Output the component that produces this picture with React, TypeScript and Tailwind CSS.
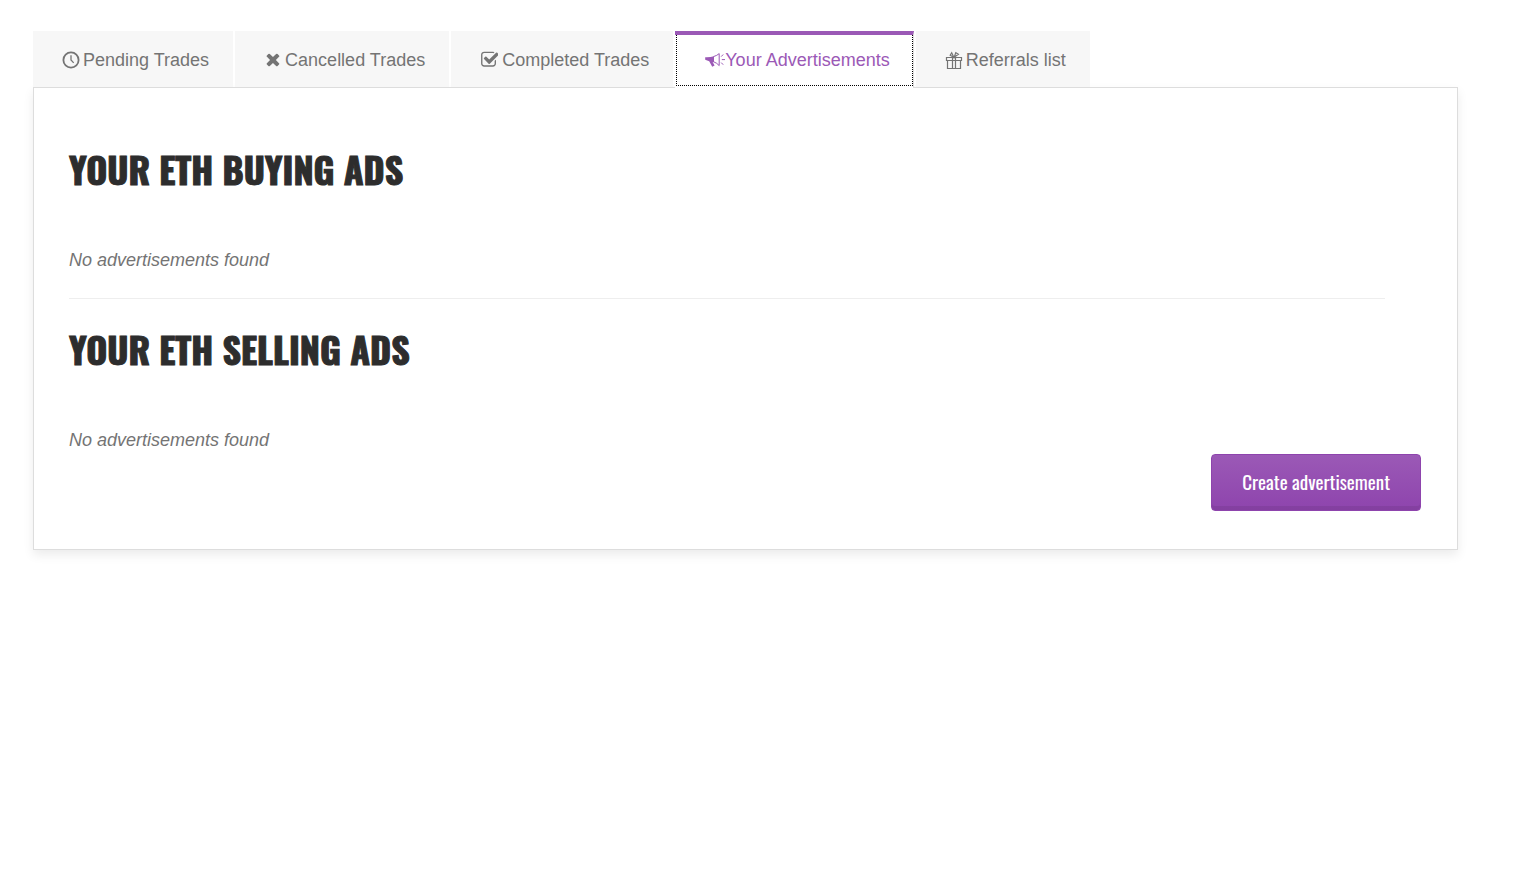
import { useState } from "react";
import type { ReactNode } from "react";

const ClockIcon = () => (
  <svg aria-hidden="true" className="mr-1 h-[18px] w-4 shrink-0" viewBox="0 0 16 18" overflow="visible" fill="none" stroke="currentColor">
    <circle cx="8" cy="9" r="7.6" strokeWidth="1.8" />
    <path d="M8 4.2V9l2.7 2.9" strokeWidth="1.3" />
  </svg>
);

const CrossIcon = () => (
  <svg aria-hidden="true" className="mr-1 h-[18px] w-4 shrink-0" viewBox="150 160 1500 1600" fill="currentColor">
    <path d="M1490 1322q0 40-28 68l-136 136q-28 28-68 28t-68-28l-294-294-294 294q-28 28-68 28t-68-28l-136-136q-28-28-28-68t28-68l294-294-294-294q-28-28-28-68t28-68l136-136q28-28 68-28t68 28l294 294 294-294q28-28 68-28t68 28l136 136q28 28 28 68t-28 68l-294 294 294 294q28 28 28 68z" />
  </svg>
);

const CheckIcon = () => (
  <svg aria-hidden="true" className="mr-1 h-[18px] w-[17px] shrink-0" viewBox="120 60 1600 1700" fill="currentColor">
    <path d="M1472 930v318q0 119-84.5 203.5t-203.5 84.5h-832q-119 0-203.5-84.5t-84.5-203.5v-832q0-119 84.5-203.5t203.5-84.5h832q63 0 117 25 15 7 18 23 3 17-9 29l-49 49q-10 10-23 10-3 0-9-2-23-6-45-6h-832q-66 0-113 47t-47 113v832q0 66 47 113t113 47h832q66 0 113-47t47-113v-254q0-13 9-22l64-64q10-10 23-10 6 0 12 3 20 8 20 29zm231-489l-814 814q-24 24-57 24t-57-24l-430-430q-24-24-24-57t24-57l110-110q24-24 57-24t57 24l263 263 647-647q24-24 57-24t57 24l110 110q24 24 24 57t-24 57z" transform="translate(60 0)" />
  </svg>
);

const MegaphoneIcon = () => (
  <svg aria-hidden="true" className="h-[18px] w-5 shrink-0" viewBox="0 0 20 18" fill="none" stroke="currentColor">
    <path d="M.2 6.3Q5 6.6 9 5.2v6L7.6 11l2 3.6-2.4 1.2-3-5.6L.2 8.8z" fill="currentColor" stroke="none" />
    <path d="M8.5 5.6Q12 4.6 14.2 2.6v12Q12 12 8.5 10.7" strokeWidth="1" />
    <path d="M16.2 5.6l2-2.1M16.8 8.6H20M16.2 11.6l2 2.1" strokeWidth="1" />
  </svg>
);

const GiftIcon = () => (
  <svg aria-hidden="true" className="mr-1 h-[18px] w-4 shrink-0" viewBox="0 0 16 18" overflow="visible" fill="none" stroke="currentColor" strokeWidth="1.2">
    <path d="M.5 6.5h15v3H.5zM1.5 9.5v8h13v-8M6.5 6.5v11M9.5 6.5v11" />
    <path d="M7.8 6.2L4.2 4.2l1.5-2.4zM8.2 6.2L9.8 1.6l2.6 1.6z" />
  </svg>
);

const tabs: { label: string; icon: ReactNode }[] = [
  { label: "Pending Trades", icon: <ClockIcon /> },
  { label: "Cancelled Trades", icon: <CrossIcon /> },
  { label: "Completed Trades", icon: <CheckIcon /> },
  { label: "Your Advertisements", icon: <MegaphoneIcon /> },
  { label: "Referrals list", icon: <GiftIcon /> },
];

function AdsSection({ title }: { title: string }) {
  return (
    <section>
      <h2 className="font-['Oswald','Liberation_Sans_Narrow',sans-serif] text-4xl leading-[58px] font-bold text-[#2d2d2d] uppercase [-webkit-text-stroke:1px_#2d2d2d]">
        {title}
      </h2>
      <p className="mt-12 text-lg leading-7 italic">No advertisements found</p>
    </section>
  );
}

export default function App() {
  const [active, setActive] = useState(3);
  return (
    <main className="bg-white pt-[31px] pr-[66px] pb-10 pl-[33px] font-['Liberation_Sans',Arial,sans-serif] text-[#747474]">
      <div role="tablist" className="relative flex flex-wrap gap-x-[2px]">
        {tabs.map((tab, i) => (
          <button
            key={tab.label}
            type="button"
            role="tab"
            aria-selected={i === active}
            onClick={() => setActive(i)}
            className={
              i === active
                ? "-mb-px h-[57px] border-t-4 border-r border-r-[#ddd] border-t-[#9b59b6] bg-white text-[#9b59b6]"
                : "h-14 bg-[#f7f7f7]"
            }
          >
            <span
              className={
                i === active
                  ? "mb-[2px] ml-px flex h-[51px] items-center border border-t-0 border-dotted border-black pr-[22px] pb-px pl-7 text-lg"
                  : "flex h-14 items-center pt-px pr-6 pl-[30px] text-lg"
              }
            >
              {tab.icon}
              {tab.label}
            </span>
          </button>
        ))}
      </div>
      <div
        role="tabpanel"
        aria-label={tabs[active].label}
        className="border border-[#ddd] pt-[52px] pr-9 pb-[38px] pl-[35px] shadow-[0_5px_10px_rgba(0,0,0,0.08)]"
      >
        <div className="mr-9">
          <AdsSection title="Your ETH buying ads" />
          <hr className="mt-6 mb-[21px] border-[#eee]" />
          <AdsSection title="Your ETH selling ads" />
        </div>
        <div className="flex justify-end">
          <button
            type="button"
            className="h-[57px] rounded border border-[#8e44ad] bg-linear-to-b from-[#9b59b6] to-[#8e44ad] px-[30px] pb-[3px] font-['Oswald','Liberation_Sans_Narrow',sans-serif] text-[19px] text-white shadow-[inset_0_-4px_0_rgba(0,0,0,0.07)]"
          >
            Create advertisement
          </button>
        </div>
      </div>
    </main>
  );
}
